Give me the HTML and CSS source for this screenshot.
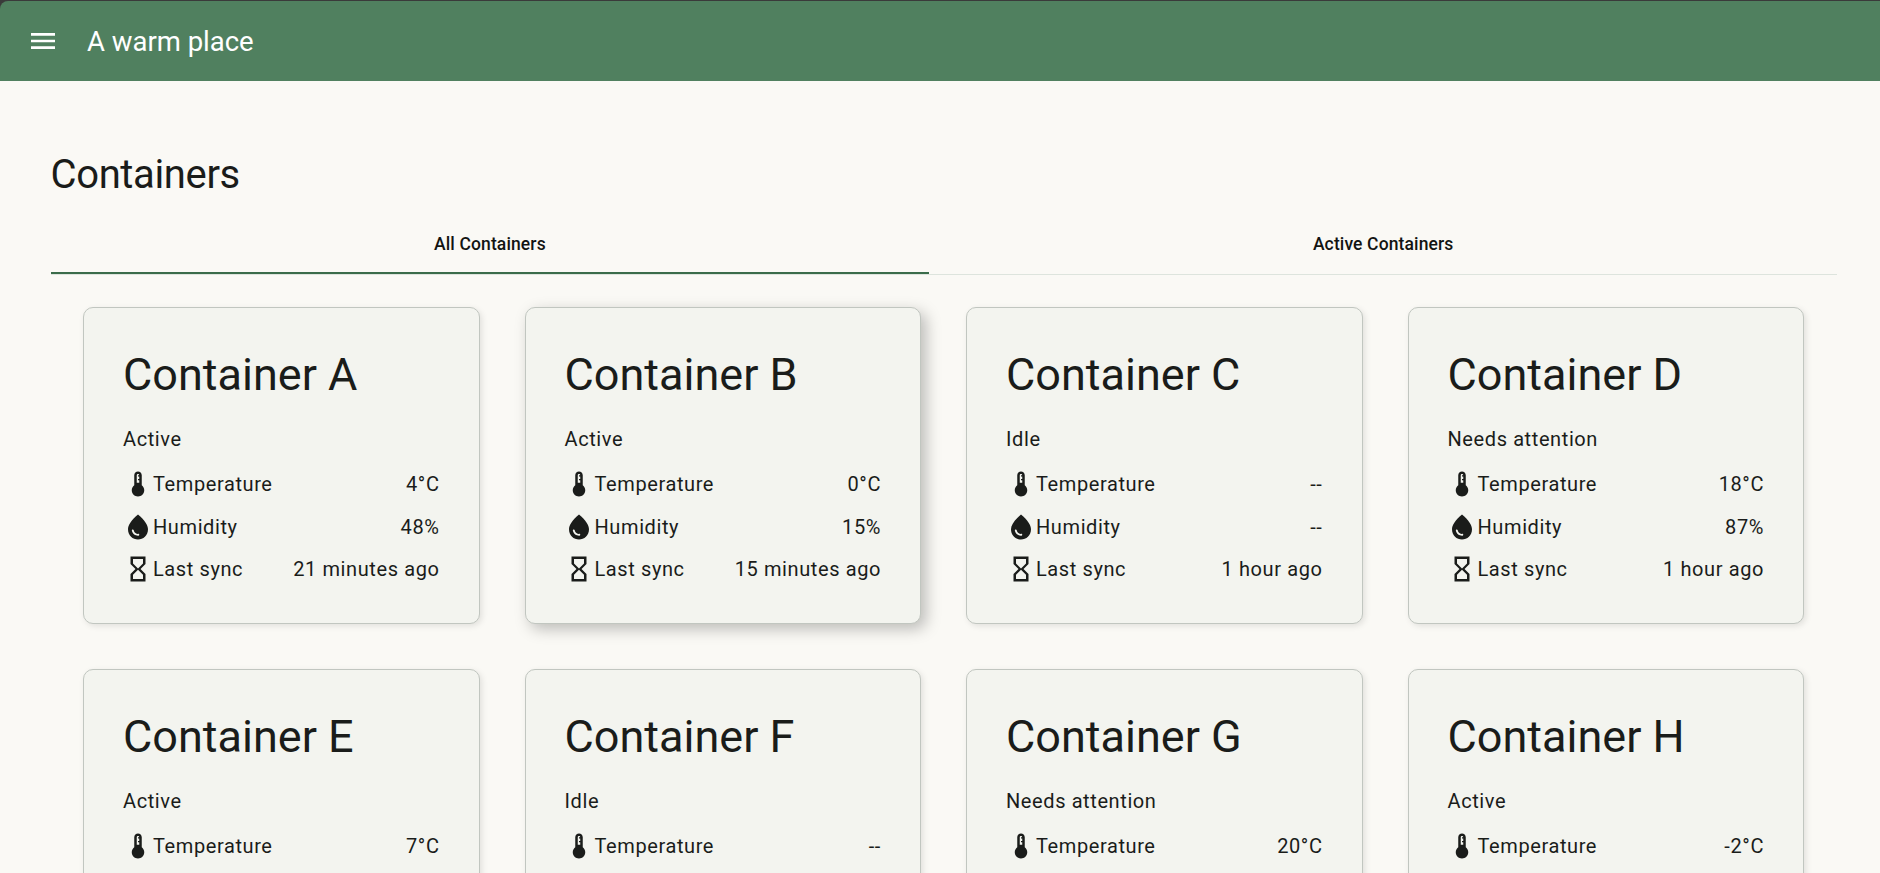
FILE: index.html
```html
<!DOCTYPE html>
<html lang="en">
<head>
<meta charset="utf-8">
<title>A warm place</title>
<link rel="stylesheet" href="styles.css">
</head>
<body>
<svg class="sprite" aria-hidden="true">
  <symbol id="thermometer" viewBox="0 0 24 24"><path d="M15 13V5c0-1.66-1.34-3-3-3S9 3.34 9 5v8c-1.21.91-2 2.37-2 4 0 2.76 2.24 5 5 5s5-2.24 5-5c0-1.63-.79-3.09-2-4zm-4-8c0-.55.45-1 1-1s1 .45 1 1h-1v1h1v2h-1v1h1v2h-2V5z"/></symbol>
  <symbol id="drop" viewBox="0 0 24 24"><path d="M12 2c-5.33 4.55-8 8.48-8 11.8 0 4.98 3.8 8.2 8 8.2s8-3.22 8-8.2c0-3.32-2.67-7.25-8-11.8zM7.83 14c.37 0 .67.26.74.62.41 2.22 2.28 2.98 3.64 2.87.43-.02.79.32.79.75 0 .4-.32.73-.72.75-2.13.13-4.62-1.09-5.19-4.12-.08-.45.28-.87.74-.87z"/></symbol>
  <symbol id="hourglass" viewBox="0 0 24 24"><path d="M6 2v6h.01L6 8.01 10 12l-4 4 .01.01H6V22h12v-5.99h-.01L18 16l-4-4 4-3.99-.01-.01H18V2H6zm10 14.5V20H8v-3.5l4-4 4 4zm-4-5l-4-4V4h8v3.5l-4 4z"/></symbol>
</svg>
<header class="toolbar">
  <button class="menu-button" aria-label="Menu">
    <svg class="menu-icon" viewBox="0 0 24 24"><path d="M3 18h18v-2H3v2zm0-5h18v-2H3v2zm0-7v2h18V6H3z"/></svg>
  </button>
  <span class="toolbar-title">A warm place</span>
</header>
<main class="content">
  <h1 class="page-title">Containers</h1>
  <nav class="tabs">
    <a class="tab tab-active">All Containers</a>
    <a class="tab">Active Containers</a>
  </nav>
  <section class="grid" id="grid"></section>
</main>
<script src="app.js"></script>
</body>
</html>
```

FILE: styles.css
```css
* { box-sizing: border-box; }

html { background: #3a3a3a; }

body {
  margin: 0;
  padding-top: 1px;
  height: 873px;
  overflow: hidden;
  font-family: Roboto, "Liberation Sans", sans-serif;
  font-size: 20px;
  color: #1a1c1a;
}

.sprite { display: none; }

.toolbar {
  display: flex;
  align-items: center;
  height: 80px;
  padding-left: 27px;
  gap: 28px;
  background: #50805f;
  color: #fff;
  border-top-left-radius: 8px;
}

.menu-button {
  display: flex;
  padding: 0;
  border: 0;
  background: none;
  color: inherit;
}

.menu-icon { width: 32px; height: 32px; fill: currentColor; }

.toolbar-title { font-size: 27.5px; line-height: 35px; }

.content {
  height: 792px;
  padding: 69px 43px 0 50.5px;
  overflow: hidden;
  background: #faf9f5;
}

.page-title {
  margin: 0;
  font-size: 40px;
  line-height: 50px;
  font-weight: 400;
  letter-spacing: -0.36px;
}

.tabs {
  display: flex;
  height: 60px;
  margin-top: 15px;
  border-bottom: 1px solid #dde4dd;
}

.tab {
  flex: 1 1 auto;
  display: flex;
  align-items: center;
  justify-content: center;
  height: 59px;
  padding: 0 30px;
  border-bottom: 2px solid transparent;
  color: #121412;
  font-size: 17.5px;
  font-weight: 500;
  letter-spacing: 0.125px;
}

.tab-active { border-bottom-color: #3a6c4a; }

.grid {
  display: grid;
  grid-template-columns: repeat(4, 1fr);
  gap: 45px;
  padding: 32px 33px 0 32.5px;
}

.card {
  height: 317px;
  padding: 39px;
  border: 1px solid #c1c6c0;
  border-radius: 10px;
  background: #f3f4ef;
  box-shadow: 2px 2px 6px rgba(0, 0, 0, 0.1);
}

.card-raised { box-shadow: 5px 5px 15px rgba(0, 0, 0, 0.25); }

.card-title {
  margin: 0;
  font-size: 45px;
  line-height: 55px;
  font-weight: 400;
}

.card-status {
  margin: 22px 0 15px;
  line-height: 30px;
  letter-spacing: 0.6px;
}

.rows { display: flex; flex-direction: column; gap: 12.5px; }

.row {
  display: flex;
  align-items: center;
  height: 30px;
  letter-spacing: 0.6px;
}

.row-icon { width: 30px; height: 30px; margin: 0 0.3px 0 -0.3px; fill: currentColor; }

.row-value { margin-left: auto; }
```

FILE: app.js
```javascript
const containers = [
  ["A", "Active", "4°C", "48%", "21 minutes ago"],
  ["B", "Active", "0°C", "15%", "15 minutes ago", true],
  ["C", "Idle", "--", "--", "1 hour ago"],
  ["D", "Needs attention", "18°C", "87%", "1 hour ago"],
  ["E", "Active", "7°C", "", ""],
  ["F", "Idle", "--", "", ""],
  ["G", "Needs attention", "20°C", "", ""],
  ["H", "Active", "-2°C", "", ""],
];

const row = (icon, label, value) => `
  <div class="row">
    <svg class="row-icon"><use href="#${icon}"/></svg>
    <span>${label}</span>
    <span class="row-value">${value}</span>
  </div>`;

document.getElementById("grid").innerHTML = containers.map(
  ([name, status, temperature, humidity, sync, raised]) => `
  <article class="card${raised ? " card-raised" : ""}">
    <h2 class="card-title">Container ${name}</h2>
    <p class="card-status">${status}</p>
    <div class="rows">
      ${row("thermometer", "Temperature", temperature)}
      ${humidity ? row("drop", "Humidity", humidity) : ""}
      ${sync ? row("hourglass", "Last sync", sync) : ""}
    </div>
  </article>`).join("");
```
